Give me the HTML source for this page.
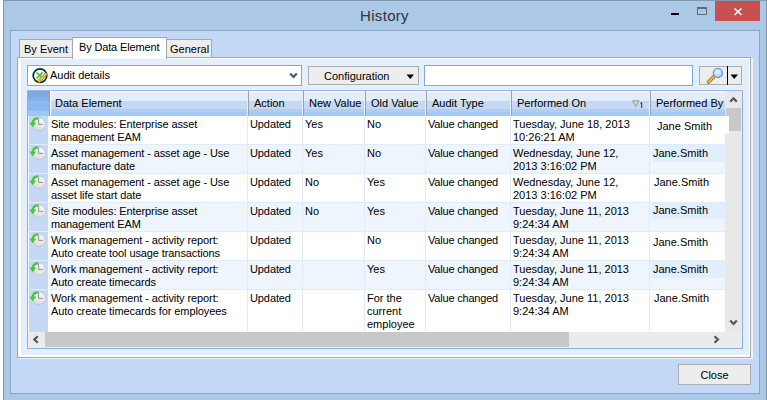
<!DOCTYPE html>
<html><head><meta charset="utf-8">
<style>
*{box-sizing:border-box;margin:0;padding:0}
html,body{width:767px;height:400px;overflow:hidden;background:#fff;font-family:"Liberation Sans",sans-serif;font-size:11px;color:#000}
.a{position:absolute}
#win{left:3px;top:0;width:764px;height:410px;background:#abc9e7;border:1px solid #8399b0}
#title{left:1px;top:0;width:767px;text-align:center;font-size:15px;color:#2e3440;line-height:18px;letter-spacing:0.3px}
#client{left:10px;top:30px;width:750px;height:364px;background:#c3d7f6;border:1px solid #8fa4bf}
.tab{background:#ededed;border:1px solid #a8a8a8;border-bottom:none}
#panel{left:17px;top:57px;width:734px;height:301px;border:1px solid #a6a6a6;background:#e3effc}
#panel:before{content:"";position:absolute;left:0;top:0;right:0;bottom:0;border:1px solid #fff;border-left-width:3px;border-bottom-width:2px}
.tb{background:#fff;border:1px solid #82a7dc}
.btn{background:#ededed;border:1px solid #adadad}
#grid{left:27px;top:90px;width:716px;height:259px;border:1px solid #8db1e3;border-top-color:#9bbbe4;background:#fff;overflow:hidden}
.hdr{top:0;height:25px;background:linear-gradient(#f0f6fe 0,#f0f6fe 2px,#e2edfb 2px,#e2edfb 10px,#c5d9f4 10px,#c5d9f4 18px,#b3cdee 18px,#b3cdee 21px,#a4c9f6 21px)}
.ht{top:6px;line-height:13px;white-space:nowrap}
.hs{top:0;width:1px;height:25px;background:#a0a0a0}
.hl{top:0;width:1px;height:25px;background:#e6eef7}
.row{left:0;width:697px;height:29px;border-bottom:1px solid #e0ecfb}
.alt{background:#eef5fd}
.rs{left:1px;width:19px;background:#c5d8f5}
.vs{top:25px;width:1px;height:216px;background:#dfebfc}
.c{line-height:13px;white-space:nowrap}
</style></head><body>
<div id="win" class="a"></div>
<div id="title" class="a" style="top:7px">History</div>
<!-- caption buttons -->
<div class="a" style="left:671px;top:13px;width:8px;height:2px;background:#000"></div>
<div class="a" style="left:697px;top:7px;width:10px;height:8px;border:1px solid #5f6a77;border-top-width:2px"></div>
<div class="a" style="left:715px;top:1px;width:45px;height:20px;background:#c75050"></div>
<svg class="a" style="left:715px;top:1px" width="45" height="20"><path d="M19.5 7.5 L26.5 14 M26.5 7.5 L19.5 14" stroke="#fff" stroke-width="1.6" fill="none"/></svg>

<div id="client" class="a"></div>
<!-- tabs -->
<div class="a tab" style="left:19px;top:39px;width:54px;height:19px"></div>
<div class="a" style="left:24px;top:43px;line-height:13px">By Event</div>
<div class="a tab" style="left:166px;top:39px;width:46px;height:19px"></div>
<div class="a" style="left:170px;top:43px;line-height:13px">General</div>
<div id="panel" class="a"></div>
<div class="a" style="left:751px;top:58px;width:2px;height:301px;background:#f2f2f2"></div>
<div class="a" style="left:18px;top:358px;width:735px;height:1px;background:#f2f2f2"></div>
<div class="a" style="left:72px;top:37px;width:95px;height:22px;background:#fff;border:1px solid #a8a8a8;border-bottom:none"></div>
<div class="a" style="left:79px;top:41px;line-height:13px;letter-spacing:-0.15px">By Data Element</div>

<!-- combobox -->
<div class="a tb" style="left:27px;top:65px;width:275px;height:21px"></div>
<svg class="a" style="left:31px;top:67px" width="18" height="18" viewBox="0 0 18 18">
 <circle cx="9" cy="8.6" r="6.8" fill="#fff" stroke="#0d2f2f" stroke-width="1.7"/>
 <path d="M5.6 5.4 L11.6 11.4 M11.6 5.4 L5.6 11.4" stroke="#55c83c" stroke-width="1.9" fill="none"/>
 <path d="M7.4 14.8 L15.4 6.6" stroke="#d9822a" stroke-width="3.2" fill="none"/>
 <path d="M7.4 14.8 L15.4 6.6" stroke="#dcd838" stroke-width="1.5" fill="none"/>
</svg>
<div class="a" style="left:50px;top:69px;line-height:13px">Audit details</div>
<svg class="a" style="left:289px;top:72px" width="10" height="8"><path d="M1.2 1.5 L4.5 5 L7.8 1.5" stroke="#555" stroke-width="2.2" fill="none"/></svg>

<!-- configuration -->
<div class="a btn" style="left:308px;top:66px;width:111px;height:19px"></div>
<div class="a" style="left:324px;top:70px;line-height:13px">Configuration</div>
<svg class="a" style="left:406px;top:74px" width="9" height="6"><path d="M0.5 0.5 L8 0.5 L4.25 5 Z" fill="#000"/></svg>

<!-- search -->
<div class="a tb" style="left:424px;top:65px;width:269px;height:21px"></div>
<div class="a btn" style="left:699px;top:66px;width:43px;height:19px"></div>
<div class="a" style="left:727px;top:66px;width:1px;height:19px;background:#000"></div>
<svg class="a" style="left:704px;top:66px" width="22" height="19">
 <path d="M4.5 16 L9.5 11" stroke="#9a6418" stroke-width="3.6" stroke-linecap="round" fill="none"/>
 <path d="M4.5 16 L9.5 11" stroke="#f2b654" stroke-width="2" stroke-linecap="round" fill="none"/>
 <defs><radialGradient id="lg" cx="0.45" cy="0.4" r="0.6"><stop offset="0" stop-color="#eef7ff"/><stop offset="0.7" stop-color="#bcd6f6"/><stop offset="1" stop-color="#8fb4ee"/></radialGradient></defs><circle cx="13.9" cy="6.9" r="4.6" fill="url(#lg)" stroke="#6792e4" stroke-width="1.2"/>
</svg>
<svg class="a" style="left:730px;top:74px" width="9" height="6"><path d="M0.5 0.5 L8 0.5 L4.25 5 Z" fill="#000"/></svg>

<!-- grid -->
<div id="grid" class="a">
 <div class="a hdr" style="left:0;width:697px"></div>
 <div class="a" style="left:0;top:0;width:21px;height:25px;background:linear-gradient(#7ea8e2 0,#7ea8e2 6px,#84b0ea 6px,#84b0ea 10px,#8cb9f1 10px,#8cb9f1 20px,#9cc8fa 20px)"></div>
 <div class="a hs" style="left:21px"></div><div class="a" style="left:22px;top:0;width:1px;height:25px;background:#fff"></div>
 <div class="a hl" style="left:219px"></div><div class="a hs" style="left:220px"></div>
 <div class="a hl" style="left:274px"></div><div class="a hs" style="left:275px"></div>
 <div class="a hl" style="left:336px"></div><div class="a hs" style="left:337px"></div>
 <div class="a hl" style="left:397px"></div><div class="a hs" style="left:398px"></div>
 <div class="a hl" style="left:482px"></div><div class="a hs" style="left:483px"></div>
 <div class="a hl" style="left:621px"></div><div class="a hs" style="left:622px"></div>
 <div class="a ht" style="left:27px">Data Element</div>
 <div class="a ht" style="left:226px">Action</div>
 <div class="a ht" style="left:281px">New Value</div>
 <div class="a ht" style="left:343px">Old Value</div>
 <div class="a ht" style="left:404px">Audit Type</div>
 <div class="a ht" style="left:489px">Performed On</div>
 <div class="a ht" style="left:628px">Performed By</div>
 <svg class="a" style="left:604px;top:9px" width="14" height="11"><path d="M0.5 0.8 L7 0.8 L3.75 6.5 Z" fill="none" stroke="#9c9a88" stroke-width="1"/><path d="M8.3 3.4 L9.7 2.4 L9.7 8" stroke="#3a2a40" stroke-width="1" fill="none"/></svg>

 <div class="a row" style="top:25px;height:29px">
<div class="a rs" style="top:0;height:28px"><svg class="a" style="left:0;top:1px" width="19" height="17" viewBox="0 0 19 17"><defs><linearGradient id="cf0" x1="0.8" y1="0" x2="0.2" y2="1"><stop offset="0" stop-color="#fbfbfb"/><stop offset="1" stop-color="#d9d9d9"/></linearGradient></defs><circle cx="9.9" cy="7.2" r="6.3" fill="url(#cf0)" stroke="#bdbdbd" stroke-width="0.7"/><path d="M9.6 1.4 V7.4 H14.2" stroke="#75808b" stroke-width="0.8" fill="none"/><path d="M9.2 1.3 C6.2 1.2 4.2 3 3.8 5.8" stroke="#45c83a" stroke-width="2.3" fill="none"/><path d="M0.4 5.4 L7.2 5.4 L3.7 10.2 Z" fill="#45c83a"/></svg></div>
<div class="a" style="left:20px;top:0;width:1px;height:29px;background:#fff"></div>
<div class="a c" style="left:23px;top:2px;letter-spacing:-0.1px">Site modules: Enterprise asset<br>management EAM</div>
<div class="a c" style="left:222px;top:2px;letter-spacing:-0.1px">Updated</div>
<div class="a c" style="left:277px;top:2px">Yes</div>
<div class="a c" style="left:339px;top:2px">No</div>
<div class="a c" style="left:400px;top:2px;letter-spacing:-0.2px">Value changed</div>
<div class="a c" style="left:485px;top:2px">Tuesday, June 18, 2013<br>10:26:21 AM</div>
<div class="a" style="left:622px;top:0;width:79px;height:18px;background:#fff;z-index:2"></div>
<div class="a c" style="left:629px;top:4px;z-index:3">Jane Smith</div>
</div>
<div class="a row alt" style="top:54px;height:29px">
<div class="a rs" style="top:0;height:28px"><svg class="a" style="left:0;top:1px" width="19" height="17" viewBox="0 0 19 17"><defs><linearGradient id="cf1" x1="0.8" y1="0" x2="0.2" y2="1"><stop offset="0" stop-color="#fbfbfb"/><stop offset="1" stop-color="#d9d9d9"/></linearGradient></defs><circle cx="9.9" cy="7.2" r="6.3" fill="url(#cf1)" stroke="#bdbdbd" stroke-width="0.7"/><path d="M9.6 1.4 V7.4 H14.2" stroke="#75808b" stroke-width="0.8" fill="none"/><path d="M9.2 1.3 C6.2 1.2 4.2 3 3.8 5.8" stroke="#45c83a" stroke-width="2.3" fill="none"/><path d="M0.4 5.4 L7.2 5.4 L3.7 10.2 Z" fill="#45c83a"/></svg></div>
<div class="a" style="left:20px;top:0;width:1px;height:29px;background:#fff"></div>
<div class="a c" style="left:23px;top:2px;letter-spacing:-0.1px">Asset management - asset age - Use<br>manufacture date</div>
<div class="a c" style="left:222px;top:2px;letter-spacing:-0.1px">Updated</div>
<div class="a c" style="left:277px;top:2px">Yes</div>
<div class="a c" style="left:339px;top:2px">No</div>
<div class="a c" style="left:400px;top:2px;letter-spacing:-0.2px">Value changed</div>
<div class="a c" style="left:485px;top:2px">Wednesday, June 12,<br>2013 3:16:02 PM</div>
<div class="a" style="left:625px;top:0;width:72px;height:17px;background:#e1eefc"></div>
<div class="a c" style="left:625px;top:2px">Jane.Smith</div>
</div>
<div class="a row" style="top:83px;height:29px">
<div class="a rs" style="top:0;height:28px"><svg class="a" style="left:0;top:1px" width="19" height="17" viewBox="0 0 19 17"><defs><linearGradient id="cf2" x1="0.8" y1="0" x2="0.2" y2="1"><stop offset="0" stop-color="#fbfbfb"/><stop offset="1" stop-color="#d9d9d9"/></linearGradient></defs><circle cx="9.9" cy="7.2" r="6.3" fill="url(#cf2)" stroke="#bdbdbd" stroke-width="0.7"/><path d="M9.6 1.4 V7.4 H14.2" stroke="#75808b" stroke-width="0.8" fill="none"/><path d="M9.2 1.3 C6.2 1.2 4.2 3 3.8 5.8" stroke="#45c83a" stroke-width="2.3" fill="none"/><path d="M0.4 5.4 L7.2 5.4 L3.7 10.2 Z" fill="#45c83a"/></svg></div>
<div class="a" style="left:20px;top:0;width:1px;height:29px;background:#fff"></div>
<div class="a c" style="left:23px;top:2px;letter-spacing:-0.1px">Asset management - asset age - Use<br>asset life start date</div>
<div class="a c" style="left:222px;top:2px;letter-spacing:-0.1px">Updated</div>
<div class="a c" style="left:277px;top:2px">No</div>
<div class="a c" style="left:339px;top:2px">Yes</div>
<div class="a c" style="left:400px;top:2px;letter-spacing:-0.2px">Value changed</div>
<div class="a c" style="left:485px;top:2px">Wednesday, June 12,<br>2013 3:16:02 PM</div>
<div class="a c" style="left:626px;top:2px">Jane.Smith</div>
</div>
<div class="a row alt" style="top:112px;height:29px">
<div class="a rs" style="top:0;height:28px"><svg class="a" style="left:0;top:1px" width="19" height="17" viewBox="0 0 19 17"><defs><linearGradient id="cf3" x1="0.8" y1="0" x2="0.2" y2="1"><stop offset="0" stop-color="#fbfbfb"/><stop offset="1" stop-color="#d9d9d9"/></linearGradient></defs><circle cx="9.9" cy="7.2" r="6.3" fill="url(#cf3)" stroke="#bdbdbd" stroke-width="0.7"/><path d="M9.6 1.4 V7.4 H14.2" stroke="#75808b" stroke-width="0.8" fill="none"/><path d="M9.2 1.3 C6.2 1.2 4.2 3 3.8 5.8" stroke="#45c83a" stroke-width="2.3" fill="none"/><path d="M0.4 5.4 L7.2 5.4 L3.7 10.2 Z" fill="#45c83a"/></svg></div>
<div class="a" style="left:20px;top:0;width:1px;height:29px;background:#fff"></div>
<div class="a c" style="left:23px;top:2px;letter-spacing:-0.1px">Site modules: Enterprise asset<br>management EAM</div>
<div class="a c" style="left:222px;top:2px;letter-spacing:-0.1px">Updated</div>
<div class="a c" style="left:277px;top:2px">No</div>
<div class="a c" style="left:339px;top:2px">Yes</div>
<div class="a c" style="left:400px;top:2px;letter-spacing:-0.2px">Value changed</div>
<div class="a c" style="left:485px;top:2px">Tuesday, June 11, 2013<br>9:24:34 AM</div>
<div class="a" style="left:624px;top:0;width:73px;height:16px;background:#e1eefc"></div>
<div class="a c" style="left:625px;top:1px">Jane.Smith</div>
</div>
<div class="a row" style="top:141px;height:29px">
<div class="a rs" style="top:0;height:28px"><svg class="a" style="left:0;top:1px" width="19" height="17" viewBox="0 0 19 17"><defs><linearGradient id="cf4" x1="0.8" y1="0" x2="0.2" y2="1"><stop offset="0" stop-color="#fbfbfb"/><stop offset="1" stop-color="#d9d9d9"/></linearGradient></defs><circle cx="9.9" cy="7.2" r="6.3" fill="url(#cf4)" stroke="#bdbdbd" stroke-width="0.7"/><path d="M9.6 1.4 V7.4 H14.2" stroke="#75808b" stroke-width="0.8" fill="none"/><path d="M9.2 1.3 C6.2 1.2 4.2 3 3.8 5.8" stroke="#45c83a" stroke-width="2.3" fill="none"/><path d="M0.4 5.4 L7.2 5.4 L3.7 10.2 Z" fill="#45c83a"/></svg></div>
<div class="a" style="left:20px;top:0;width:1px;height:29px;background:#fff"></div>
<div class="a c" style="left:23px;top:2px;letter-spacing:-0.1px">Work management - activity report:<br>Auto create tool usage transactions</div>
<div class="a c" style="left:222px;top:2px;letter-spacing:-0.1px">Updated</div>

<div class="a c" style="left:339px;top:2px">No</div>
<div class="a c" style="left:400px;top:2px;letter-spacing:-0.2px">Value changed</div>
<div class="a c" style="left:485px;top:2px">Tuesday, June 11, 2013<br>9:24:34 AM</div>
<div class="a c" style="left:625px;top:4px">Jane.Smith</div>
</div>
<div class="a row alt" style="top:170px;height:29px">
<div class="a rs" style="top:0;height:28px"><svg class="a" style="left:0;top:1px" width="19" height="17" viewBox="0 0 19 17"><defs><linearGradient id="cf5" x1="0.8" y1="0" x2="0.2" y2="1"><stop offset="0" stop-color="#fbfbfb"/><stop offset="1" stop-color="#d9d9d9"/></linearGradient></defs><circle cx="9.9" cy="7.2" r="6.3" fill="url(#cf5)" stroke="#bdbdbd" stroke-width="0.7"/><path d="M9.6 1.4 V7.4 H14.2" stroke="#75808b" stroke-width="0.8" fill="none"/><path d="M9.2 1.3 C6.2 1.2 4.2 3 3.8 5.8" stroke="#45c83a" stroke-width="2.3" fill="none"/><path d="M0.4 5.4 L7.2 5.4 L3.7 10.2 Z" fill="#45c83a"/></svg></div>
<div class="a" style="left:20px;top:0;width:1px;height:29px;background:#fff"></div>
<div class="a c" style="left:23px;top:2px;letter-spacing:-0.1px">Work management - activity report:<br>Auto create timecards</div>
<div class="a c" style="left:222px;top:2px;letter-spacing:-0.1px">Updated</div>

<div class="a c" style="left:339px;top:2px">Yes</div>
<div class="a c" style="left:400px;top:2px;letter-spacing:-0.2px">Value changed</div>
<div class="a c" style="left:485px;top:2px">Tuesday, June 11, 2013<br>9:24:34 AM</div>
<div class="a" style="left:624px;top:0;width:73px;height:17px;background:#e1eefc"></div>
<div class="a c" style="left:625px;top:2px">Jane.Smith</div>
</div>
<div class="a row" style="top:199px;height:42px;border-bottom:none">
<div class="a rs" style="top:0;height:42px"><svg class="a" style="left:0;top:1px" width="19" height="17" viewBox="0 0 19 17"><defs><linearGradient id="cf6" x1="0.8" y1="0" x2="0.2" y2="1"><stop offset="0" stop-color="#fbfbfb"/><stop offset="1" stop-color="#d9d9d9"/></linearGradient></defs><circle cx="9.9" cy="7.2" r="6.3" fill="url(#cf6)" stroke="#bdbdbd" stroke-width="0.7"/><path d="M9.6 1.4 V7.4 H14.2" stroke="#75808b" stroke-width="0.8" fill="none"/><path d="M9.2 1.3 C6.2 1.2 4.2 3 3.8 5.8" stroke="#45c83a" stroke-width="2.3" fill="none"/><path d="M0.4 5.4 L7.2 5.4 L3.7 10.2 Z" fill="#45c83a"/></svg></div>
<div class="a" style="left:20px;top:0;width:1px;height:42px;background:#fff"></div>
<div class="a c" style="left:23px;top:2px;letter-spacing:-0.1px">Work management - activity report:<br>Auto create timecards for employees</div>
<div class="a c" style="left:222px;top:2px;letter-spacing:-0.1px">Updated</div>

<div class="a c" style="left:339px;top:2px">For the<br>current<br>employee</div>
<div class="a c" style="left:400px;top:2px;letter-spacing:-0.2px">Value changed</div>
<div class="a c" style="left:485px;top:2px">Tuesday, June 11, 2013<br>9:24:34 AM</div>
<div class="a c" style="left:626px;top:2px">Jane.Smith</div>
</div>
<div class="a vs" style="left:219px"></div>
<div class="a vs" style="left:274px"></div>
<div class="a vs" style="left:336px"></div>
<div class="a vs" style="left:397px"></div>
<div class="a vs" style="left:482px"></div>
<div class="a vs" style="left:621px"></div>
<div class="a" style="left:697px;top:0;width:17px;height:241px;background:#e8e8e8"></div>
<svg class="a" style="left:701px;top:5px" width="10" height="8"><path d="M1.2 5.8 L4.5 2.3 L7.8 5.8" stroke="#555" stroke-width="2.2" fill="none"/></svg>
<div class="a" style="left:698px;top:17px;width:15px;height:23px;background:#c8c8c8"></div>
<svg class="a" style="left:701px;top:228px" width="10" height="8"><path d="M1.2 1.5 L4.5 5 L7.8 1.5" stroke="#555" stroke-width="2.2" fill="none"/></svg>
<div class="a" style="left:0;top:241px;width:714px;height:16px;background:#ebebeb"></div>
<div class="a" style="left:17px;top:241px;width:524px;height:15px;background:#c8c8c8"></div>
<svg class="a" style="left:4px;top:244px" width="8" height="10"><path d="M5.8 1.2 L2.3 4.5 L5.8 7.8" stroke="#555" stroke-width="2.2" fill="none"/></svg>
<svg class="a" style="left:685px;top:244px" width="8" height="10"><path d="M1.5 1.2 L5 4.5 L1.5 7.8" stroke="#555" stroke-width="2.2" fill="none"/></svg>
</div>
<div class="a btn" style="left:678px;top:364px;width:73px;height:21px"></div>
<div class="a" style="left:678px;top:369px;width:73px;text-align:center;line-height:13px">Close</div>
</body></html>
